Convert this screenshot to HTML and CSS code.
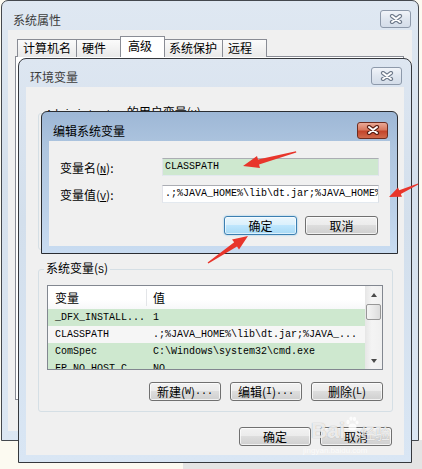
FILE: index.html
```html
<!DOCTYPE html>
<html lang="zh-CN">
<head>
    <meta charset="UTF-8">
    <title>编辑系统变量</title>
    <link rel="stylesheet" href="styles.css">
</head>
<body>
<div class="desk">
    <div class="shade"></div>

    <!-- 系统属性 -->
    <div class="win sys">
        <div class="titlebar">
            <span class="title">系统属性</span>
            <span class="close"><svg width="14" height="10" viewBox="0 0 14 10"><path d="M3 2 L11 8 M11 2 L3 8" stroke="#6f7b8c" stroke-width="4.2" stroke-linecap="round"/><path d="M3 2 L11 8 M11 2 L3 8" stroke="#fff" stroke-width="2" stroke-linecap="round"/></svg></span>
        </div>
        <div class="client sys-client">
            <div class="tabs">
                <div class="tab">计算机名</div>
                <div class="tab">硬件</div>
                <div class="tab active">高级</div>
                <div class="tab">系统保护</div>
                <div class="tab">远程</div>
            </div>
            <div class="tab-panel"></div>
        </div>
    </div>

    <!-- 环境变量 -->
    <div class="win env">
        <div class="titlebar">
            <span class="title">环境变量</span>
            <span class="close"><svg width="14" height="10" viewBox="0 0 14 10"><path d="M3 2 L11 8 M11 2 L3 8" stroke="#6f7b8c" stroke-width="4.2" stroke-linecap="round"/><path d="M3 2 L11 8 M11 2 L3 8" stroke="#fff" stroke-width="2" stroke-linecap="round"/></svg></span>
        </div>
        <div class="client env-client">
            <fieldset class="group user-group">
                <legend><span class="a">Administrator</span> 的用户变量(<span class="a">U</span>)</legend>
            </fieldset>

            <fieldset class="group">
                <legend>系统变量(<span class="a">S</span>)</legend>
                <div class="listview">
                    <div class="lv-body">
                        <div class="lv-head">
                            <div class="col1">变量</div>
                            <div class="col2">值</div>
                        </div>
                        <div class="lv-row green">
                            <div class="col1">_DFX_INSTALL...</div>
                            <div class="col2">1</div>
                        </div>
                        <div class="lv-row plain">
                            <div class="col1">CLASSPATH</div>
                            <div class="col2">.;%JAVA_HOME%\lib\dt.jar;%JAVA_...</div>
                        </div>
                        <div class="lv-row green">
                            <div class="col1">ComSpec</div>
                            <div class="col2">C:\Windows\system32\cmd.exe</div>
                        </div>
                        <div class="lv-row green">
                            <div class="col1">FP_NO_HOST_C...</div>
                            <div class="col2">NO</div>
                        </div>
                    </div>
                    <div class="lv-scroll">
                        <div class="sb-btn"><span class="tri up"></span></div>
                        <div class="sb-thumb"></div>
                        <div class="sb-track"></div>
                        <div class="sb-btn"><span class="tri down"></span></div>
                    </div>
                </div>
                <div class="btn-row">
                    <div class="btn">新建(<span class="a">W</span>)<span class="a">...</span></div>
                    <div class="btn">编辑(<span class="a">I</span>)<span class="a">...</span></div>
                    <div class="btn">删除(<span class="a">L</span>)</div>
                </div>
            </fieldset>

            <div class="btn-row footer">
                <div class="btn">确定</div>
                <div class="btn">取消</div>
            </div>
        </div>
    </div>

    <!-- 编辑系统变量 -->
    <div class="win edit">
        <div class="titlebar">
            <span class="title">编辑系统变量</span>
            <span class="close red"><svg width="14" height="10" viewBox="0 0 14 10"><path d="M3 2 L11 8 M11 2 L3 8" stroke="#5b1e12" stroke-width="4.2" stroke-linecap="round"/><path d="M3 2 L11 8 M11 2 L3 8" stroke="#fff" stroke-width="2" stroke-linecap="round"/></svg></span>
        </div>
        <div class="client edit-client">
            <div class="field">
                <label>变量名(<span class="a"><u>N</u></span>):</label>
                <div class="input green">CLASSPATH</div>
            </div>
            <div class="field">
                <label>变量值(<span class="a"><u>V</u></span>):</label>
                <div class="input">.;%JAVA_HOME%\lib\dt.jar;%JAVA_HOME%</div>
            </div>
            <div class="btn-row">
                <div class="btn default">确定</div>
                <div class="btn">取消</div>
            </div>
        </div>
    </div>

    <svg class="arrows" width="422" height="469" viewBox="0 0 422 469">
        <polygon points="243,166 257,156 258,159.5 296,151.3 296.3,152.6 259,164.5 260,168"/>
        <polygon points="389,197 398,187.5 399.2,190.3 418,183.4 418.3,184.6 400.8,193.9 402,196.7"/>
        <polygon points="248,236 232,239.4 234.2,242.3 207.6,262.4 208.4,263.6 237,246.5 239,249.4"/>
    </svg>

    <div class="watermark">
        <span class="wm-bai">Bai</span>
        <svg class="wm-paw" width="14" height="16" viewBox="0 0 14 16">
            <ellipse cx="3" cy="6" rx="1.6" ry="2.2"/>
            <ellipse cx="6" cy="2.6" rx="1.6" ry="2.2"/>
            <ellipse cx="9.5" cy="3" rx="1.6" ry="2.2"/>
            <ellipse cx="12" cy="6.5" rx="1.5" ry="2"/>
            <ellipse cx="7.5" cy="11" rx="4" ry="3.5"/>
        </svg>
        <span class="wm-jy">经验</span>
        <div class="wm-url">jingyan.baidu.com</div>
    </div>
</div>
</body>
</html>
```

FILE: styles.css
```css
* {
    box-sizing: border-box;
}
body {
    margin: 0;
    background-color: #fcfaf1;
    font-family: "Noto Sans CJK SC", sans-serif;
    font-size: 12px;
    color: #000;
}
.desk {
    position: relative;
    width: 422px;
    height: 469px;
    overflow: hidden;
}
.shade {
    position: absolute;
    left: 183px;
    top: 440px;
    right: 0;
    bottom: 0;
    background-color: #e4e4e4;
}
.a {
    font-family: "Liberation Mono", monospace;
    font-size: 10px;
}

/* windows */
.win {
    position: absolute;
    display: flex;
    flex-direction: column;
    border: 1px solid #44484e;
    padding: 0 7px 7px;
}
.sys {
    left: 1px;
    top: 0;
    width: 418px;
    height: 441px;
    padding: 0 6px 9px;
    border-radius: 7px 7px 0 0;
    background: linear-gradient(#dfe8f2, #d5e0ec 40%, #dce7f3);
}
.env {
    left: 18px;
    top: 58px;
    width: 394px;
    height: 405px;
    border-color: #35383d;
    border-radius: 8px 8px 0 0;
    background: linear-gradient(#dde6f1, #d3dfec 40%, #d9e6f4);
}
.edit {
    left: 41px;
    top: 111px;
    width: 357px;
    height: 143px;
    border-color: #2a2d32;
    border-radius: 6px 6px 0 0;
    background: linear-gradient(#9db7d6, #aec5df 25%, #bcd1e9 70%, #c9dcf1);
}
.titlebar {
    display: flex;
    align-items: center;
    justify-content: space-between;
    flex-shrink: 0;
    height: 29px;
    padding-top: 7px;
}
.env .titlebar {
    height: 28px;
    padding-top: 6px;
}
.title {
    margin-left: 4px;
    color: #3c3c3c;
}
.sys .title {
    margin-left: 5px;
}
.edit .title {
    color: #000;
}
.close {
    display: flex;
    align-items: center;
    justify-content: center;
    width: 31px;
    height: 18px;
    margin-right: 2px;
    border: 1px solid #8d99aa;
    border-radius: 3px;
    background: linear-gradient(#f1f4f9, #dfe6ef 50%, #d4dde9);
}
.sys .close {
    margin-right: 1px;
}
.close.red {
    height: 17px;
    border-color: #6d2c1f;
    background: linear-gradient(#e9a996, #d8795f 45%, #c3442a 55%, #d06a4c);
}
.client {
    flex: 1;
    background-color: #f0f0f0;
}

/* 系统属性 */
.sys-client {
    display: flex;
    flex-direction: column;
}
.tabs {
    display: flex;
    align-items: flex-end;
    height: 21px;
    margin: 6px 0 -1px 9px;
}
.tab {
    position: relative;
    height: 18px;
    min-width: 45px;
    padding: 0 5px;
    margin-left: -1px;
    border: 1px solid #898c95;
    border-bottom: none;
    background: linear-gradient(#fbfbfb, #e9e9e9);
    line-height: 16px;
}
.tab:first-child {
    margin-left: 0;
}
.tab.active {
    z-index: 1;
    height: 21px;
    padding: 0 7px;
    margin: 0 -1px 0 -1px;
    background: #fff;
    line-height: 18px;
}
.tab-panel {
    flex: 1;
    margin: 0 8px 31px 7px;
    border: 1px solid #898c95;
    background-color: #fff;
}

/* 环境变量 */
.env-client {
    display: flex;
    flex-direction: column;
    padding: 18px 11px 0 12px;
}
.group {
    margin: 0;
    min-width: 0;
    padding: 7px 9px 10px 8px;
    border: 1px solid #d5dfe5;
    border-radius: 3px;
}
.group legend {
    padding: 0 2px;
    margin-left: -3px;
    line-height: 14px;
}
.user-group {
    height: 145px;
    margin-bottom: 11px;
}
.listview {
    display: flex;
    height: 85px;
    border: 1px solid #828790;
    background-color: #fff;
}
.lv-body {
    flex: 1;
    min-width: 0;
    overflow: hidden;
}
.lv-head {
    display: flex;
    align-items: center;
    height: 23px;
    background: linear-gradient(#fff, #fff 60%, #f7f8f9);
}
.lv-head .col1 {
    border-right: 1px solid #e3e5e8;
}
.col1 {
    width: 99px;
    flex-shrink: 0;
    padding-left: 7px;
    white-space: nowrap;
}
.col2 {
    padding-left: 6px;
    white-space: nowrap;
}
.lv-row {
    display: flex;
    align-items: center;
    height: 17px;
    font-family: "Liberation Mono", monospace;
    font-size: 10px;
}
.lv-row.green {
    background-color: #cee8cf;
}
.lv-row.plain {
    background-color: #f6f6f6;
}
.lv-scroll {
    display: flex;
    flex-direction: column;
    width: 17px;
    background: linear-gradient(90deg, #e6e6e6, #f4f4f4 40%, #f0f0f0);
}
.sb-btn {
    display: flex;
    align-items: center;
    justify-content: center;
    height: 17px;
}
.sb-thumb {
    height: 16px;
    margin: 1px 1px 0;
    border: 1px solid #979797;
    border-radius: 2px;
    background: linear-gradient(90deg, #f4f4f4, #e9e9e9 50%, #dcdcdc);
}
.sb-track {
    flex: 1;
}
.tri {
    width: 0;
    height: 0;
    border-left: 3.5px solid transparent;
    border-right: 3.5px solid transparent;
}
.tri.up {
    border-bottom: 4px solid #4a4a4a;
}
.tri.down {
    border-top: 4px solid #4a4a4a;
}
.btn-row {
    display: flex;
    justify-content: flex-end;
    gap: 9px;
    margin-top: 12px;
}
.footer {
    margin-top: 15px;
    margin-right: 1px;
}
.btn {
    display: flex;
    align-items: center;
    justify-content: center;
    width: 72px;
    height: 19px;
    border: 1px solid #707070;
    border-radius: 3px;
    background: linear-gradient(#f2f2f2, #ebebeb 50%, #dddddd 50%, #cfcfcf);
    box-shadow: inset 0 0 0 1px rgba(255, 255, 255, 0.7);
    line-height: 1;
}

/* 编辑系统变量 */
.edit-client {
    padding: 17px 11px 0 11px;
}
.field {
    display: flex;
    align-items: center;
    height: 18px;
}
.field + .field {
    margin-top: 9px;
}
.field label {
    width: 102px;
    flex-shrink: 0;
}
.input {
    flex: 1;
    height: 18px;
    padding: 0 2px;
    border: 1px solid;
    border-color: #abadb3 #dbdfe6 #e3e9ef #e2e3ea;
    background-color: #fff;
    font-family: "Liberation Mono", monospace;
    font-size: 10px;
    line-height: 16px;
    white-space: nowrap;
    overflow: hidden;
}
.input.green {
    background-color: #cee8cf;
}
.edit .btn-row {
    gap: 8px;
    margin-top: 13px;
    margin-right: 1px;
}
.edit .btn {
    width: 73px;
}
.btn.default {
    border-color: #3c7fb1;
    background: linear-gradient(#eaf6fd, #d9f0fc 50%, #bee6fd 50%, #a7d9f5);
    box-shadow: inset 0 0 0 1px rgba(255, 255, 255, 0.6), 0 0 2px #7fc3ea;
}

/* red arrows */
.arrows {
    position: absolute;
    left: 0;
    top: 0;
    pointer-events: none;
}
.arrows polygon {
    fill: #e8352b;
}

/* watermark */
.watermark {
    position: absolute;
    left: 311px;
    top: 416px;
    display: flex;
    align-items: flex-end;
    color: rgba(255, 255, 255, 0.8);
    text-shadow: 0 0 1px rgba(110, 110, 110, 0.6);
}
.wm-bai {
    font-family: "Liberation Sans", sans-serif;
    font-size: 22px;
    font-weight: bold;
    line-height: 26px;
}
.wm-paw {
    margin: 0 1px 12px 0;
    fill: rgba(255, 255, 255, 0.8);
}
.wm-jy {
    font-size: 15px;
    line-height: 22px;
}
.wm-url {
    position: absolute;
    left: -8px;
    top: 30px;
    font-family: "Liberation Sans", sans-serif;
    font-size: 8px;
    color: rgba(255, 255, 255, 0.7);
    text-shadow: none;
}
```
